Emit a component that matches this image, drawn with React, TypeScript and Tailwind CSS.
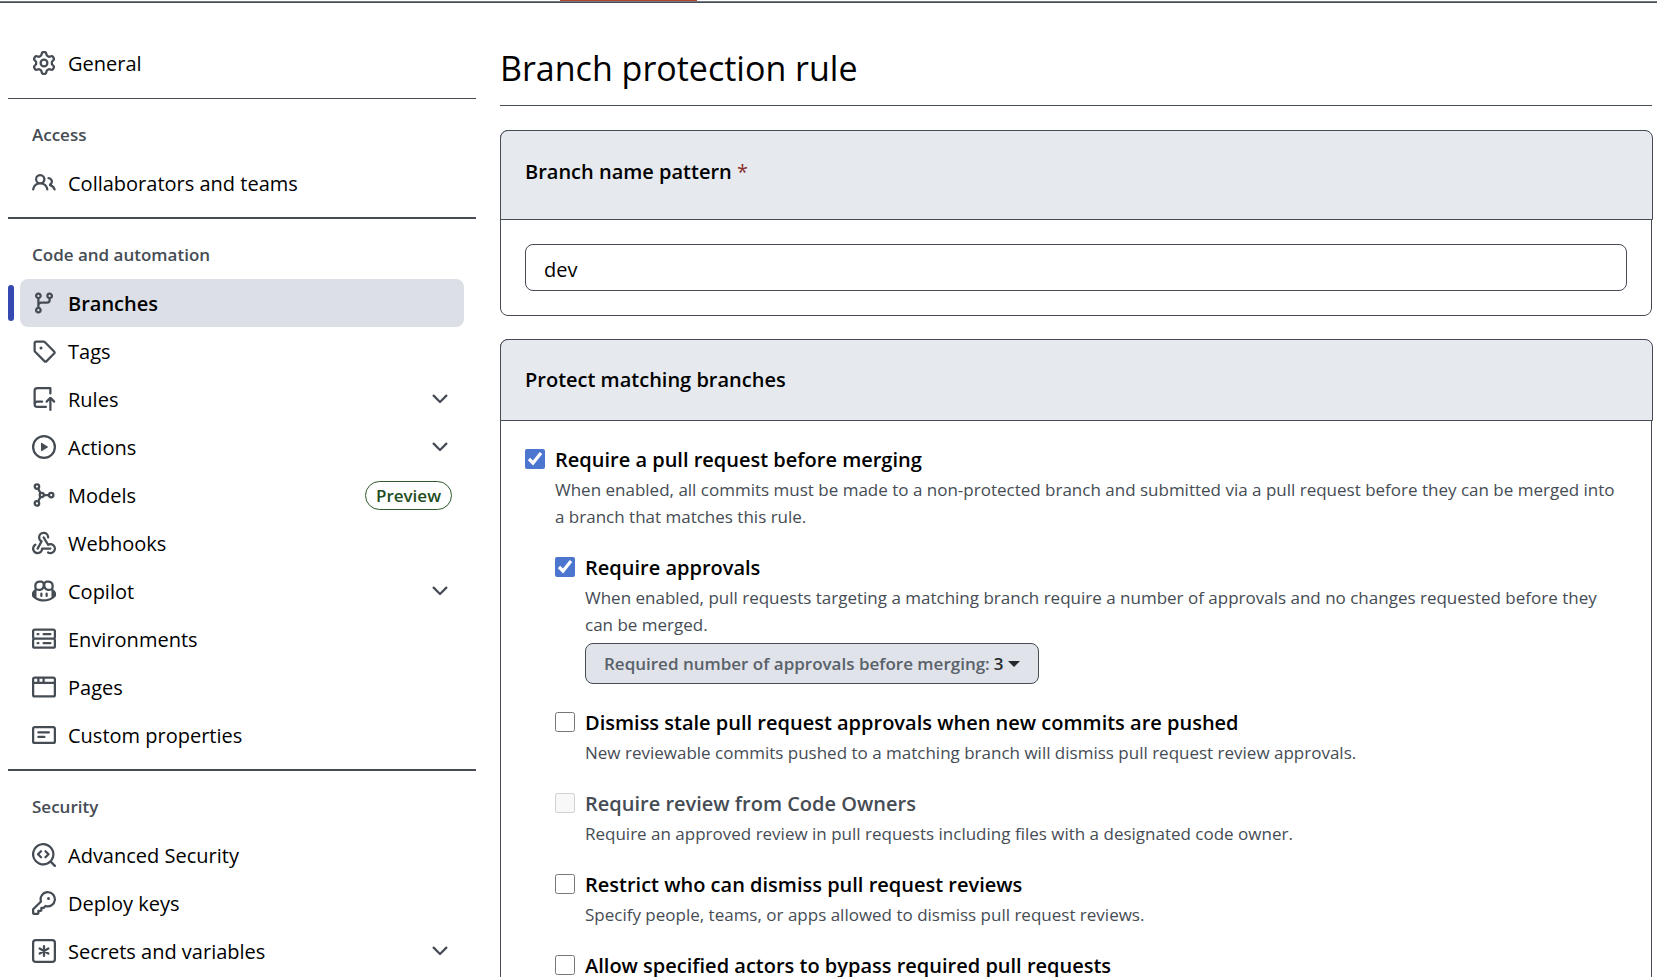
import type { ReactNode } from "react";

const icons = {
  gear: "M8 0a8.2 8.2 0 0 1 .701.031C9.444.095 9.99.645 10.16 1.29l.288 1.107c.018.066.079.158.212.224.231.114.454.243.668.386.123.082.233.09.299.071l1.103-.303c.644-.176 1.392.021 1.82.63.27.385.506.792.704 1.218.315.675.111 1.422-.364 1.891l-.814.806c-.049.048-.098.147-.088.294.016.257.016.515 0 .772-.01.147.038.246.088.294l.814.806c.475.469.679 1.216.364 1.891a7.977 7.977 0 0 1-.704 1.217c-.428.61-1.176.807-1.82.63l-1.102-.302c-.067-.019-.177-.011-.3.071a5.909 5.909 0 0 1-.668.386c-.133.066-.194.158-.211.224l-.29 1.106c-.168.646-.715 1.196-1.458 1.26a8.006 8.006 0 0 1-1.402 0c-.743-.064-1.289-.614-1.458-1.26l-.289-1.106c-.018-.066-.079-.158-.212-.224a5.738 5.738 0 0 1-.668-.386c-.123-.082-.233-.09-.299-.071l-1.103.303c-.644.176-1.392-.021-1.82-.63a8.12 8.12 0 0 1-.704-1.218c-.315-.675-.111-1.422.363-1.891l.815-.806c.05-.048.098-.147.088-.294a6.214 6.214 0 0 1 0-.772c.01-.147-.038-.246-.088-.294l-.815-.806C.635 6.045.431 5.298.746 4.623a7.92 7.92 0 0 1 .704-1.217c.428-.61 1.176-.807 1.82-.63l1.102.302c.067.019.177.011.3-.071.214-.143.437-.272.668-.386.133-.066.194-.158.211-.224l.29-1.106C6.009.645 6.556.095 7.299.03 7.53.01 7.764 0 8 0Zm-.571 1.525c-.036.003-.108.036-.137.146l-.289 1.105c-.147.561-.549.967-.998 1.189-.173.086-.34.183-.5.29-.417.278-.97.423-1.529.27l-1.103-.303c-.109-.03-.175.016-.195.045-.22.312-.412.644-.573.99-.014.031-.021.11.059.19l.815.806c.411.406.562.957.53 1.456a4.709 4.709 0 0 0 0 .582c.032.499-.119 1.05-.53 1.456l-.815.806c-.081.08-.073.159-.059.19.162.346.353.677.573.989.02.03.085.076.195.046l1.102-.303c.56-.153 1.113-.008 1.53.27.161.107.328.204.501.29.447.222.85.629.997 1.189l.289 1.105c.029.109.101.143.137.146a6.6 6.6 0 0 0 1.142 0c.036-.003.108-.036.137-.146l.289-1.105c.147-.561.549-.967.998-1.189.173-.086.34-.183.5-.29.417-.278.97-.423 1.529-.27l1.103.303c.109.029.175-.016.195-.045.22-.313.411-.644.573-.99.014-.031.021-.11-.059-.19l-.815-.806c-.411-.406-.562-.957-.53-1.456a4.709 4.709 0 0 0 0-.582c-.032-.499.119-1.05.53-1.456l.815-.806c.081-.08.073-.159.059-.19a6.464 6.464 0 0 0-.573-.989c-.02-.03-.085-.076-.195-.046l-1.102.303c-.56.153-1.113.008-1.53-.27a4.44 4.44 0 0 0-.501-.29c-.447-.222-.85-.629-.997-1.189l-.289-1.105c-.029-.11-.101-.143-.137-.146a6.6 6.6 0 0 0-1.142 0ZM11 8a3 3 0 1 1-6 0 3 3 0 0 1 6 0ZM9.5 8a1.5 1.5 0 1 0-3.001.001A1.5 1.5 0 0 0 9.5 8Z",
  people: "M2 5.5a3.5 3.5 0 1 1 5.898 2.549 5.508 5.508 0 0 1 3.034 4.084.75.75 0 1 1-1.482.235 4 4 0 0 0-7.9 0 .75.75 0 0 1-1.482-.236A5.507 5.507 0 0 1 3.102 8.05 3.493 3.493 0 0 1 2 5.5ZM11 4a3.001 3.001 0 0 1 2.22 5.018 5.01 5.01 0 0 1 2.56 3.012.749.749 0 0 1-.885.954.752.752 0 0 1-.549-.514 3.507 3.507 0 0 0-2.522-2.372.75.75 0 0 1-.574-.73v-.352a.75.75 0 0 1 .416-.672A1.5 1.5 0 0 0 11 5.5.75.75 0 0 1 11 4Zm-5.5-.5a2 2 0 1 0-.001 3.999A2 2 0 0 0 5.5 3.5Z",
  branch: "M9.5 3.25a2.25 2.25 0 1 1 3 2.122V6A2.5 2.5 0 0 1 10 8.5H6a1 1 0 0 0-1 1v1.128a2.251 2.251 0 1 1-1.5 0V5.372a2.25 2.25 0 1 1 1.5 0v1.836A2.493 2.493 0 0 1 6 7h4a1 1 0 0 0 1-1v-.628A2.25 2.25 0 0 1 9.5 3.25Zm-6 0a.75.75 0 1 0 1.5 0 .75.75 0 0 0-1.5 0Zm8.25-.75a.75.75 0 1 0 0 1.5.75.75 0 0 0 0-1.5ZM4.25 12a.75.75 0 1 0 0 1.5.75.75 0 0 0 0-1.5Z",
  tag: "M1 7.775V2.75C1 1.784 1.784 1 2.75 1h5.025c.464 0 .91.184 1.238.513l6.25 6.25a1.75 1.75 0 0 1 0 2.474l-5.026 5.026a1.75 1.75 0 0 1-2.474 0l-6.25-6.25A1.752 1.752 0 0 1 1 7.775Zm1.5 0c0 .066.026.13.073.177l6.25 6.25a.25.25 0 0 0 .354 0l5.025-5.025a.25.25 0 0 0 0-.354l-6.25-6.25a.25.25 0 0 0-.177-.073H2.75a.25.25 0 0 0-.25.25ZM6 5a1 1 0 1 1 0 2 1 1 0 0 1 0-2Z",
  rules: "M1 2.5A2.5 2.5 0 0 1 3.5 0h8.75a.75.75 0 0 1 .75.75v3.5a.75.75 0 0 1-1.5 0V1.5h-8a1 1 0 0 0-1 1v6.708A2.493 2.493 0 0 1 3.5 9h3.25a.75.75 0 0 1 0 1.5H3.5a1 1 0 0 0 0 2h5.75a.75.75 0 0 1 0 1.5H3.5A2.5 2.5 0 0 1 1 11.5Zm13.23 7.79h-.001l-1.224-1.224v6.184a.75.75 0 0 1-1.5 0V9.066L10.28 10.29a.75.75 0 0 1-1.06-1.061l2.505-2.504a.75.75 0 0 1 1.06 0L15.29 9.23a.751.751 0 0 1-.018 1.042.751.751 0 0 1-1.042.018Z",
  play: "M8 0a8 8 0 1 1 0 16A8 8 0 0 1 8 0ZM1.5 8a6.5 6.5 0 1 0 13 0 6.5 6.5 0 0 0-13 0Zm4.879-2.773 4.264 2.559a.25.25 0 0 1 0 .428l-4.264 2.559A.25.25 0 0 1 6 10.559V5.442a.25.25 0 0 1 .379-.215Z",
  webhook: "M5.5 4.25a2.25 2.25 0 0 1 4.5 0 .75.75 0 0 0 1.5 0 3.75 3.75 0 1 0-6.14 2.889l-2.272 4.258a.75.75 0 0 0 1.324.706L7 7.25a.75.75 0 0 0-.309-1.015A2.25 2.25 0 0 1 5.5 4.25ZM7.364 3.607a.75.75 0 0 1 1.03.257l2.608 4.349a3.75 3.75 0 1 1-.628 6.785.75.75 0 0 1 .752-1.299 2.25 2.25 0 1 0-.033-3.88.75.75 0 0 1-1.03-.256L7.107 4.636a.75.75 0 0 1 .257-1.03ZM2.9 8.776A.75.75 0 0 1 2.625 9.8 2.25 2.25 0 1 0 6 11.75a.75.75 0 0 1 .75-.751h5.5a.75.75 0 0 1 0 1.5H7.425a3.751 3.751 0 1 1-5.55-3.998.75.75 0 0 1 1.024.274Z",
  copilot: "M7.998 15.035c-4.562 0-7.873-2.914-7.998-3.749V9.338c.085-.628.677-1.686 1.588-2.065.013-.07.024-.143.036-.218.029-.183.06-.384.126-.612-.201-.508-.254-1.084-.254-1.656 0-.87.128-1.769.693-2.484.579-.733 1.494-1.124 2.724-1.261 1.206-.134 2.262.034 2.944.765.05.053.096.108.139.165.044-.057.094-.112.143-.165.682-.731 1.738-.899 2.944-.765 1.23.137 2.145.528 2.724 1.261.566.715.693 1.614.693 2.484 0 .572-.053 1.148-.254 1.656.066.228.098.429.126.612.012.076.024.148.037.218.924.385 1.522 1.471 1.591 2.095v1.872c0 .766-3.351 3.795-8.002 3.795Zm0-1.485c2.28 0 4.584-1.11 5.002-1.433V7.862l-.023-.116c-.49.21-1.075.291-1.727.291-1.146 0-2.059-.327-2.71-.991A3.222 3.222 0 0 1 8 6.303a3.24 3.24 0 0 1-.544.743c-.65.664-1.563.991-2.71.991-.652 0-1.236-.081-1.727-.291l-.023.116v4.255c.419.323 2.722 1.433 5.002 1.433ZM6.762 2.83c-.193-.206-.637-.413-1.682-.297-1.019.113-1.479.404-1.713.7-.247.312-.369.789-.369 1.554 0 .793.129 1.171.308 1.371.162.181.519.379 1.442.379.853 0 1.339-.235 1.638-.54.315-.322.527-.827.617-1.553.117-.935-.037-1.395-.241-1.614Zm4.155-.297c-1.044-.116-1.488.091-1.681.297-.204.219-.359.679-.242 1.614.091.726.303 1.231.618 1.553.299.305.784.54 1.638.54.922 0 1.28-.198 1.442-.379.179-.2.308-.578.308-1.371 0-.765-.123-1.242-.37-1.554-.233-.296-.693-.587-1.713-.7ZM6.25 9.037a.75.75 0 0 1 .75.75v1.501a.75.75 0 0 1-1.5 0V9.787a.75.75 0 0 1 .75-.75Zm4.25.75v1.501a.75.75 0 0 1-1.5 0V9.787a.75.75 0 0 1 1.5 0Z",
  server: "M1.75 1h12.5c.966 0 1.75.784 1.75 1.75v4c0 .372-.116.717-.314 1 .198.283.314.628.314 1v4a1.75 1.75 0 0 1-1.75 1.75H1.75A1.75 1.75 0 0 1 0 12.75v-4c0-.358.109-.707.314-1a1.739 1.739 0 0 1-.314-1v-4C0 1.784.784 1 1.75 1ZM1.5 2.75v4c0 .138.112.25.25.25h12.5a.25.25 0 0 0 .25-.25v-4a.25.25 0 0 0-.25-.25H1.75a.25.25 0 0 0-.25.25Zm.25 5.75a.25.25 0 0 0-.25.25v4c0 .138.112.25.25.25h12.5a.25.25 0 0 0 .25-.25v-4a.25.25 0 0 0-.25-.25ZM7 4.75A.75.75 0 0 1 7.75 4h4.5a.75.75 0 0 1 0 1.5h-4.5A.75.75 0 0 1 7 4.75ZM7.75 10h4.5a.75.75 0 0 1 0 1.5h-4.5a.75.75 0 0 1 0-1.5ZM3 4.75A.75.75 0 0 1 3.75 4h.5a.75.75 0 0 1 0 1.5h-.5A.75.75 0 0 1 3 4.75ZM3.75 10h.5a.75.75 0 0 1 0 1.5h-.5a.75.75 0 0 1 0-1.5Z",
  browser: "M0 2.75C0 1.784.784 1 1.75 1h12.5c.966 0 1.75.784 1.75 1.75v10.5A1.75 1.75 0 0 1 14.25 15H1.75A1.75 1.75 0 0 1 0 13.25ZM14.5 6h-13v7.25c0 .138.112.25.25.25h12.5a.25.25 0 0 0 .25-.25Zm-6-3.5v2h6V2.75a.25.25 0 0 0-.25-.25ZM5 2.5v2h2v-2Zm-3.25 0a.25.25 0 0 0-.25.25V4.5h2v-2Z",
  note: "M0 3.75C0 2.784.784 2 1.75 2h12.5c.966 0 1.75.784 1.75 1.75v8.5A1.75 1.75 0 0 1 14.25 14H1.75A1.75 1.75 0 0 1 0 12.25Zm1.75-.25a.25.25 0 0 0-.25.25v8.5c0 .138.112.25.25.25h12.5a.25.25 0 0 0 .25-.25v-8.5a.25.25 0 0 0-.25-.25ZM3.5 6.25a.75.75 0 0 1 .75-.75h7a.75.75 0 0 1 0 1.5h-7a.75.75 0 0 1-.75-.75Zm.75 2.25h4a.75.75 0 0 1 0 1.5h-4a.75.75 0 0 1 0-1.5Z",
  codescan: "M8.47 4.97a.75.75 0 0 0 0 1.06L9.94 7.5 8.47 8.97a.75.75 0 1 0 1.06 1.06l2-2a.75.75 0 0 0 0-1.06l-2-2a.75.75 0 0 0-1.06 0ZM6.53 6.03a.75.75 0 0 0-1.06-1.06l-2 2a.75.75 0 0 0 0 1.06l2 2a.75.75 0 1 0 1.06-1.06L5.06 7.5l1.47-1.47ZM12.246 13.307a7.5 7.5 0 1 1 1.06-1.06l2.474 2.473a.749.749 0 0 1-.326 1.275.749.749 0 0 1-.734-.215ZM1.5 7.5a6.002 6.002 0 0 0 3.608 5.504 6.002 6.002 0 0 0 6.486-1.117.748.748 0 0 1 .292-.293A6 6 0 1 0 1.5 7.5Z",
  key: "M10.5 0a5.499 5.499 0 1 1-1.288 10.848l-.932.932a.749.749 0 0 1-.53.22H7v.75a.749.749 0 0 1-.22.53l-.5.5a.749.749 0 0 1-.53.22H5v.75a.749.749 0 0 1-.22.53l-.5.5a.749.749 0 0 1-.53.22h-2A1.75 1.75 0 0 1 0 14.25v-2c0-.199.079-.389.22-.53l4.932-4.932A5.5 5.5 0 0 1 10.5 0Zm-4 5.5c-.001.431.069.86.205 1.269a.75.75 0 0 1-.181.768L1.5 12.56v1.69c0 .138.112.25.25.25h1.69l.06-.06v-1.19a.75.75 0 0 1 .75-.75h1.19l.06-.06v-1.19a.75.75 0 0 1 .75-.75h1.19l1.023-1.025a.75.75 0 0 1 .768-.18A4 4 0 1 0 6.5 5.5ZM11 6a1 1 0 1 1 0-2 1 1 0 0 1 0 2Z",
  chevron: "M12.78 5.22a.749.749 0 0 1 0 1.06l-4.25 4.25a.749.749 0 0 1-1.06 0L3.22 6.28a.749.749 0 1 1 1.06-1.06L8 8.939l3.72-3.719a.749.749 0 0 1 1.06 0Z",
};

type IconName = keyof typeof icons | "model" | "asterisk";

function Icon({ name }: { name: IconName }) {
  const box = "size-6 shrink-0 text-[#454c54]";
  if (name === "model") {
    return (
      <svg viewBox="0 0 16 16" className={box} fill="none" stroke="currentColor" strokeWidth="1.5" aria-hidden="true">
        <circle cx="3.3" cy="2.4" r="1.5" />
        <circle cx="6.5" cy="8" r="1.35" />
        <circle cx="12.8" cy="8" r="1.5" />
        <circle cx="3.3" cy="13.6" r="1.5" />
        <path d="M4 3.7 5.8 6.9M4 12.3l1.8-3.2M7.8 8h3.5" />
      </svg>
    );
  }
  if (name === "asterisk") {
    return (
      <svg viewBox="0 0 16 16" className={box} fill="none" stroke="currentColor" strokeWidth="1.5" strokeLinecap="round" aria-hidden="true">
        <rect x="0.75" y="0.75" width="14.5" height="14.5" rx="1.75" />
        <path d="M8 4.75v6.5M5.1 6.3l5.8 3.4M10.9 6.3 5.1 9.7" />
      </svg>
    );
  }
  return (
    <svg viewBox="0 0 16 16" className={box} fill="currentColor" aria-hidden="true">
      <path d={icons[name]} />
    </svg>
  );
}

type Item = { icon: IconName; text: string; expands?: boolean; badge?: string; current?: boolean };

function NavItem({ icon, text, expands, badge, current }: Item) {
  const row = "flex h-12 w-full items-center gap-3 rounded-lg px-3 text-left text-[20px] text-black";
  const content = (
    <>
      <Icon name={icon} />
      <span className={current ? "grow pt-[2px] font-semibold" : "grow pt-[2px]"}>{text}</span>
      {badge && (
        <span className="rounded-full border border-[#2c5a2b] px-[10px] text-[17px] leading-[27px] font-semibold text-[#1f4d1e]">
          {badge}
        </span>
      )}
      {expands && <Icon name="chevron" />}
    </>
  );
  return (
    <li className="relative px-3">
      {current && <span className="absolute top-[6px] left-0 h-9 w-[6px] rounded-full bg-[#3549b0]" />}
      {expands ? (
        <button type="button" aria-expanded="false" className={row}>
          {content}
        </button>
      ) : (
        <a href="#" aria-current={current ? "page" : undefined} className={current ? `${row} bg-[#dcdfe6]` : row}>
          {content}
        </a>
      )}
    </li>
  );
}

function NavGroup({ title, items, thin }: { title: string; items: Item[]; thin?: boolean }) {
  return (
    <section>
      <div className={thin ? "h-3 border-b border-[#454c54]" : "h-3 border-b-2 border-[#454c54]"} />
      <h2 className="px-6 pt-6 pb-3 text-[17px] leading-6 font-semibold text-[#454c54]">{title}</h2>
      <ul>
        {items.map((item) => (
          <NavItem key={item.text} {...item} />
        ))}
      </ul>
    </section>
  );
}

const codeItems: Item[] = [
  { icon: "branch", text: "Branches", current: true },
  { icon: "tag", text: "Tags" },
  { icon: "rules", text: "Rules", expands: true },
  { icon: "play", text: "Actions", expands: true },
  { icon: "model", text: "Models", badge: "Preview" },
  { icon: "webhook", text: "Webhooks" },
  { icon: "copilot", text: "Copilot", expands: true },
  { icon: "server", text: "Environments" },
  { icon: "browser", text: "Pages" },
  { icon: "note", text: "Custom properties" },
];

const securityItems: Item[] = [
  { icon: "codescan", text: "Advanced Security" },
  { icon: "key", text: "Deploy keys" },
  { icon: "asterisk", text: "Secrets and variables", expands: true },
];

function Card({ header, children }: { header: ReactNode; children: ReactNode }) {
  return (
    <section className="mb-[23px] rounded-lg border border-[#454c54]">
      <div className="-mt-px -mr-[2px] -ml-px rounded-t-lg border border-[#454c54] bg-[#e6eaef] px-6 text-[20px] leading-8 font-semibold text-black">
        {header}
      </div>
      {children}
    </section>
  );
}

type OptionProps = {
  id: string;
  label: string;
  note?: string;
  checked?: boolean;
  disabled?: boolean;
  children?: ReactNode;
};

function Option({ id, label, note, checked, disabled, children }: OptionProps) {
  return (
    <div className="mb-[22px] flex gap-[10px]">
      <input
        id={id}
        type="checkbox"
        defaultChecked={checked}
        disabled={disabled}
        className="mt-[5px] size-5 shrink-0 accent-[#4c75d0]"
      />
      <div className="min-w-0 grow">
        <label
          htmlFor={id}
          className={
            disabled
              ? "block text-[20px] leading-8 font-semibold text-[#454c54]"
              : "block text-[20px] leading-8 font-semibold text-black"
          }
        >
          {label}
        </label>
        {note && <p className="text-[17px] leading-[27px] text-[#454c54]">{note}</p>}
        {children}
      </div>
    </div>
  );
}

export default function App() {
  return (
    <div className="min-h-screen bg-white font-['Open_Sans','Noto_Sans',sans-serif]">
      <div className="border-b border-[#454c54]">
        <div className="border-b border-[#747a81]">
          <div className="ml-[560px] h-px w-[137px] bg-[#b5442f]" />
        </div>
      </div>
      <div className="flex pr-[5px] pl-2">
        <nav className="w-[468px] shrink-0 pt-9" aria-label="Settings">
          <ul>
            <NavItem icon="gear" text="General" />
          </ul>
          <NavGroup title="Access" thin items={[{ icon: "people", text: "Collaborators and teams" }]} />
          <NavGroup title="Code and automation" items={codeItems} />
          <NavGroup title="Security" items={securityItems} />
        </nav>
        <main className="ml-6 min-w-0 grow pt-10">
          <h1 className="mb-6 border-b border-[#454c54] pb-[11px] text-[34px] leading-[51px] text-black">
            Branch protection rule
          </h1>

          <Card
            header={
              <label htmlFor="pattern" className="block pt-[25px] pb-[31px]">
                Branch name pattern <span className="font-normal text-[#862d2d]">*</span>
              </label>
            }
          >
            <div className="px-6 py-6">
              <input
                id="pattern"
                type="text"
                defaultValue="dev"
                className="block h-[47px] w-full rounded-lg border border-[#454c54] px-[18px] pt-[3px] text-[20px] text-black"
              />
            </div>
          </Card>

          <Card header={<h2 className="py-6">Protect matching branches</h2>}>
            <div className="px-6 pt-[23px]">
              <Option
                id="require-pr"
                checked
                label="Require a pull request before merging"
                note="When enabled, all commits must be made to a non-protected branch and submitted via a pull request before they can be merged into a branch that matches this rule."
              >
                <div className="pt-[22px]">
                  <Option
                    id="approvals"
                    checked
                    label="Require approvals"
                    note="When enabled, pull requests targeting a matching branch require a number of approvals and no changes requested before they can be merged."
                  >
                    <button
                      type="button"
                      className="mt-[5px] mb-px flex h-[41px] items-center rounded-lg border border-[#454c54] bg-[#e0e3e9] px-[18px] text-[17px] font-semibold text-[#59616a]"
                    >
                      Required number of approvals before merging:
                      <span className="ml-1 text-[#25292e]">3</span>
                      <span className="ml-1 border-x-[6px] border-t-[6px] border-x-transparent border-t-[#25292e]" />
                    </button>
                  </Option>
                  <Option
                    id="stale"
                    label="Dismiss stale pull request approvals when new commits are pushed"
                    note="New reviewable commits pushed to a matching branch will dismiss pull request review approvals."
                  />
                  <Option
                    id="owners"
                    disabled
                    label="Require review from Code Owners"
                    note="Require an approved review in pull requests including files with a designated code owner."
                  />
                  <Option
                    id="restrict"
                    label="Restrict who can dismiss pull request reviews"
                    note="Specify people, teams, or apps allowed to dismiss pull request reviews."
                  />
                  <Option id="bypass" label="Allow specified actors to bypass required pull requests" />
                </div>
              </Option>
            </div>
          </Card>
        </main>
      </div>
    </div>
  );
}
